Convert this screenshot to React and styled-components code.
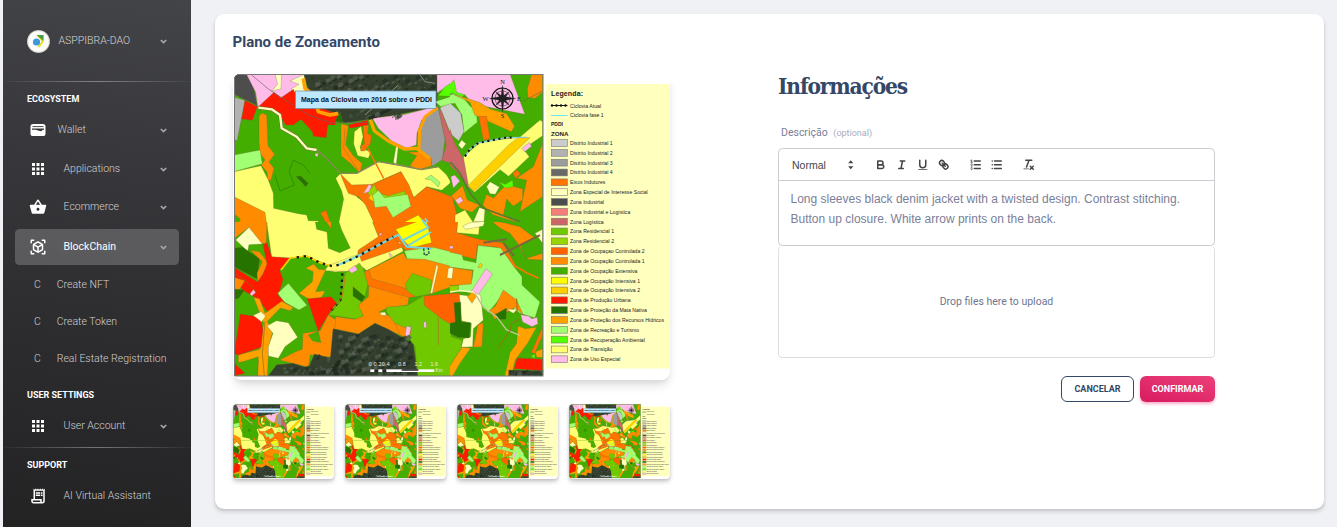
import React from "react";
import styled, { createGlobalStyle, css } from "styled-components";
import { MdApps, MdShoppingBasket, MdViewInAr, MdOutlineReceiptLong } from "react-icons/md";

const GlobalStyle = createGlobalStyle`
  * { box-sizing: border-box; }
  body { margin: 0; background: #f0f1f5; font-family: Roboto, "Liberation Sans", sans-serif; overflow: hidden; }
`;

const Page = styled.div`
  display: flex;
  height: 527px;
  padding-left: 3px;
`;

/* ---------- Sidebar ---------- */

const Sidebar = styled.nav`
  flex: none;
  width: 188px;
  height: 527px;
  overflow: hidden;
  background: linear-gradient(188deg, #434448 0%, #38383c 30%, #2c2c2f 65%, #232324 100%);
  color: #c9c9cb;
`;

const Profile = styled.div`
  height: 81px;
  display: flex;
  align-items: center;
  padding: 1px 24px 0 24px;
`;

const ProfileName = styled.span`
  flex: 1;
  margin-left: 8.5px;
  padding-bottom: 1px;
  font-size: 10.5px;
  font-weight: 300;
  color: #d6d6d8;
`;

const Divider = styled.div`
  height: 1px;
  margin-top: ${(p) => p.$top || 0}px;
  background: linear-gradient(90deg, rgba(255, 255, 255, 0.02), rgba(255, 255, 255, 0.36), rgba(255, 255, 255, 0.02));
`;

const SectionLabel = styled.div`
  height: ${(p) => p.$height || 33}px;
  display: flex;
  align-items: center;
  padding: 1px 0 0 24px;
  font-size: 9px;
  font-weight: 700;
  color: #fff;
`;

const NavItem = styled.div`
  height: ${(p) => p.$height || 36}px;
  margin: ${(p) => p.$top || 0}px 12px 0;
  padding: ${(p) => p.$drop || 0}px 12px 0;
  display: flex;
  align-items: center;
  border-radius: 4.5px;
  font-size: 10.5px;
  font-weight: 300;
  color: #d0d0d2;
  ${(p) =>
    p.$active &&
    css`
      background: rgba(255, 255, 255, 0.2);
      font-weight: 400;
      color: #fff;
    `}
`;

const NavIcon = styled.span`
  width: 22px;
  display: flex;
  justify-content: center;
  color: #fff;
  font-size: 18px;
`;

const NavText = styled.span`
  flex: 1;
  margin-left: ${(p) => p.$gap ?? 14.5}px;
  padding-bottom: 1px;
`;

const SubItem = styled.div`
  height: 37px;
  display: flex;
  align-items: center;
  padding: 1px 0 0 31px;
  font-size: 10.5px;
  font-weight: 300;
  color: #d0d0d2;
`;

const SubLetter = styled.span`
  width: 22.75px;
`;

/* ---------- Main card ---------- */

const Main = styled.main`
  flex: 1;
  padding: 14px 13px 18px 24px;
`;

const Card = styled.section`
  height: 495px;
  padding: 19px 109px 0 18px;
  background: #fff;
  border-radius: 9px;
  box-shadow: 0 3px 4.5px -0.75px rgba(0, 0, 0, 0.12), 0 1.5px 3px -0.75px rgba(0, 0, 0, 0.1);
`;

const CardTitle = styled.h1`
  margin: 0 0 0 -0.5px;
  height: 18px;
  font-size: 15px;
  line-height: 18px;
  font-weight: 700;
  color: #344767;
`;

const Columns = styled.div`
  display: flex;
  justify-content: space-between;
  padding-top: 22px;
`;

const Gallery = styled.div`
  width: 437px;
`;

const MainImage = styled.div`
  height: 307px;
  border-radius: 9px;
  overflow: hidden;
  box-shadow: 0 7px 11px -2px rgba(0, 0, 0, 0.13), 0 3px 5px -1px rgba(0, 0, 0, 0.06);
  > svg { display: block; width: 100%; height: 100%; }
`;

const Thumbs = styled.div`
  display: flex;
  justify-content: space-between;
  margin-top: 24px;
`;

const Thumb = styled.div`
  width: 101px;
  height: 75px;
  border-radius: 4.5px;
  overflow: hidden;
  background: #fff;
  box-shadow: 0 3px 4.5px -0.75px rgba(0, 0, 0, 0.18), 0 1.5px 3px -0.75px rgba(0, 0, 0, 0.1);
  > svg { display: block; width: 100%; height: 100%; }
`;

const Form = styled.div`
  width: 437px;
`;

const FormTitle = styled.h2`
  margin: 0;
  height: 27px;
  font-family: "Roboto Slab", "DejaVu Serif Condensed", "DejaVu Serif", serif;
  font-size: 22.5px;
  line-height: 27px;
  font-weight: 700;
  letter-spacing: -1.15px;
  color: #344767;
  white-space: nowrap;
`;

const FieldLabel = styled.div`
  height: 48px;
  padding: 25px 0 0 3px;
  font-size: 10.5px;
  line-height: 15px;
  color: #7b809a;
  small { margin-left: 3px; font-size: 9px; color: #a9adc0; }
`;

const Editor = styled.div`
  height: 98px;
  border: 1px solid #c9ccd1;
  border-radius: 4.5px;
`;

const Toolbar = styled.div`
  height: 32px;
  display: flex;
  align-items: center;
  padding-left: 13px;
  border-bottom: 1px solid #c9ccd1;
`;

const FormatPicker = styled.div`
  width: 65px;
  margin-right: 13px;
  display: flex;
  align-items: center;
  justify-content: space-between;
  font-family: "Liberation Sans", Arial, sans-serif;
  font-size: 10.5px;
  color: #444;
`;

const ToolGroup = styled.div`
  display: flex;
  margin-right: 11px;
`;

const Tool = styled.span`
  width: 21px;
  height: 18px;
  display: flex;
  align-items: center;
  justify-content: center;
`;

const Glyph = styled.svg`
  width: 13.5px;
  height: 13.5px;
  fill: none;
  stroke: #444;
  stroke-width: 2;
  stroke-linecap: round;
  stroke-linejoin: round;
  .fill { fill: #444; stroke: none; }
  .thin { stroke-width: 1; }
`;

const EditorText = styled.p`
  margin: 0;
  padding: 8px 11.5px;
  font-family: "Liberation Sans", Arial, sans-serif;
  font-size: 12px;
  line-height: 20px;
  color: #7b809a;
`;

const DropZone = styled.div`
  height: 112px;
  display: flex;
  align-items: center;
  justify-content: center;
  border: 1px solid #dcdee3;
  border-top-width: 0;
  border-radius: 4.5px;
  font-size: 10.5px;
  color: #6f7690;
`;

const Actions = styled.div`
  display: flex;
  justify-content: flex-end;
  gap: 6px;
  margin-top: 18px;
`;

const Button = styled.button`
  width: ${(p) => p.$width}px;
  height: 26px;
  padding: 0;
  border-radius: 6px;
  font-family: Roboto, sans-serif;
  font-size: 9px;
  font-weight: 700;
  color: #344767;
  background: #fff;
  border: 1px solid #344767;
  ${(p) =>
    p.$primary &&
    css`
      color: #fff;
      border: 0;
      background: linear-gradient(195deg, #ec407a, #d81b60);
      box-shadow: 0 2px 3px rgba(233, 30, 99, 0.35);
    `}
`;

/* ---------- Icons ---------- */

const Chevron = () => (
  <svg width="7" height="5" viewBox="0 0 7 5" fill="none" stroke="#a6a7ad" strokeWidth="1.7">
    <path d="M.8 1 3.5 3.6 6.2 1" />
  </svg>
);

const WalletIcon = () => (
  <svg width="16" height="14" viewBox="0 0 16 14">
    <rect x=".5" y="1" width="15" height="12" rx="2.6" fill="#fff" />
    <path d="M2.5 3.6h11" stroke="#36363a" strokeWidth=".9" />
    <path d="M2 5.5h12v1.2c-1.2 0-1.6.4-2.2 1-.5.6-1.2.7-2 .4L5.500 6.800H2z" fill="#36363a" />
  </svg>
);

const Logo = () => (
  <svg width="23" height="23" viewBox="0 0 23 23">
    <circle cx="11.5" cy="11.5" r="11.3" fill="#fffefa" />
    <circle cx="11.5" cy="11.5" r="10.8" fill="none" stroke="#b9b7ae" strokeDasharray="1.2 .7" />
    <path d="M9.500 5H16.500v7L12.500 17.500l-2-1 4-5z" fill="#e9df23" />
    <path d="M9.500 5H16.500v6z" fill="#4d9a47" />
    <circle cx="9.500" cy="12" r="3.600" fill="#3f97dd" />
  </svg>
);

const toolGroups = [
  [
    <>
      <path d="M5,4H9.5A2.5,2.5,0,0,1,12,6.5v0A2.5,2.5,0,0,1,9.5,9H5V4Z" />
      <path d="M5,9h5.5A2.5,2.5,0,0,1,13,11.5v0A2.5,2.5,0,0,1,10.5,14H5V9Z" />
    </>,
    <path d="M7 4H13M5 14H11M8 14 10 4" />,
    <>
      <path d="M5,3V9a4,4,0,0,0,8,0V3" />
      <rect className="fill" x="3" y="15" width="12" height="1" />
    </>,
    <>
      <path d="M7 7 11 11" />
      <path d="M8.9,4.577a3.476,3.476,0,0,1,.36,4.679A3.476,3.476,0,0,1,4.577,8.9C3.185,7.5,2.035,6.4,4.217,4.217S7.5,3.185,8.9,4.577Z" />
      <path d="M13.423,9.1a3.476,3.476,0,0,0-4.679-.36,3.476,3.476,0,0,0,.36,4.679c1.392,1.392,2.5,2.542,4.679.36S14.815,10.5,13.423,9.1Z" />
    </>,
  ],
  [
    <>
      <path d="M7 4H15M7 9H15M7 14H15" />
      <path className="thin" d="M2.5 5.5H4.5M2.5 3 3.5 2.5V5.5M4.5,10.5h-2c0-.234,1.85-1.076,1.85-2.234A.959.959,0,0,0,2.5,8.156M2.5,14.846a.959.959,0,0,0,1.85-.109A.7.7,0,0,0,3.75,14a.688.688,0,0,0,.6-.736.959.959,0,0,0-1.85-.109" />
    </>,
    <path d="M6 4H15M6 9H15M6 14H15M3 4H3M3 9H3M3 14H3" />,
  ],
  [
    <>
      <path d="M5 3H13M6 12 9.35 3M11 11 15 15M15 11 11 15" />
      <rect className="fill" x="2" y="14" width="7" height="1" />
    </>,
  ],
];

/* ---------- Zoning map ---------- */

const C = {
  green: "#44ae00", lime: "#70c800", lime2: "#96d600", mint: "#a2ff73", vivid: "#55ff00", forest: "#267300",
  orange: "#ff8c00", amber: "#ffa200", deep: "#ff7300", burnt: "#ff6200", gold: "#ffd000", yellow: "#ffff73",
  bright: "#ffff00", cream: "#ffffbe", red: "#ff1a00", pink: "#ffbce8", rose: "#cd6668", g1: "#cccccc",
  g2: "#b2b2b2", g3: "#9c9c9c", g4: "#686868", dark: "#4d4d4d", sat: "#35402f",
};

const northWest = [
  ["dark", "27,27 64,27 84,60 97,122 60,104 27,88"],
  ["pink", "64,27 236,27 215,80 165,110 98,125 92,82"],
  ["cream", "150,27 170,27 168,72 140,78 158,58"],
  ["cream", "195,48 238,28 246,82 210,86 198,72 222,58"],
  ["sat", "236,27 640,27 636,126 500,152 440,162 360,174 300,150 250,75"],
  ["g2", "27,97 60,106 36,228 27,222"],
  ["red", "60,106 97,125 82,166 50,162"],
  ["red", "100,125 147,82 168,98 205,73 232,128 290,130 340,148 330,180 308,180 304,218 265,214 262,200 228,163 205,180 182,180 165,150 130,133"],
  ["orange", "102,152 112,144 125,150 129,242 149,268 132,290 147,310 138,346 128,344 126,320 108,300 120,285 105,265 102,230"],
  ["mint", "27,270 105,255 112,296 27,320"],
  ["yellow", "27,320 108,302 130,345 145,385 146,430 220,446 245,450 250,467 280,468 280,480 27,480"],
  ["orange", "27,395 120,442 125,480 27,480"],
  ["green", "27,446 46,462 38,480 27,480"],
  ["forest", "330,168 345,140 354,174"],
  ["orange", "348,176 370,182 362,240 385,272 412,296 405,324 374,293 348,272"],
  ["red", "370,180 428,165 430,180 375,190"],
  ["yellow", "388,200 408,184 414,215 405,250 438,260 430,280 398,272 386,236"],
  ["deep", "414,182 430,180 428,206 440,210 436,238 418,258 407,258 408,240 418,238"],
  ["pink", "442,160 540,148 636,124 590,165 576,205 574,240 545,250 500,228 460,190"],
  ["g3", "600,152 640,128 660,220 652,284 622,304 618,286 582,256 584,190"],
  ["orange", "555,302 575,272 548,262 590,260 618,278 620,302 580,315"],
  ["g1", "645,128 680,110 680,214"],
  ["rose", "640,128 650,140 690,245 690,300 650,286 664,240"],
  ["pink", "636,27 680,27 680,55 636,84"],
  ["vivid", "660,65 690,48 690,95 640,92"],
  ["mint", "630,110 690,90 690,112 648,125"],
  ["yellow", "332,340 348,324 395,325 460,290 520,300 585,314 640,306 665,330 678,352 650,376 605,365 566,398 528,320 455,352 430,365 395,395 420,414 452,480 340,480 356,402 350,378"],
  ["deep", "346,326 380,360 442,358 455,352 528,320 552,360 566,398 605,365 680,395 680,480 450,480 422,420 402,396 370,385"],
  ["lime2", "428,380 448,358 460,384 490,392 540,378 540,396 480,408 436,402"],
  ["mint", "442,392 460,376 478,398 520,392 548,388 558,424 504,458 484,424 450,428"],
  ["gold", "430,400 440,385 448,412"],
  ["pink", "414,386 432,358 440,362 432,380"],
  ["mint", "600,342 618,330 645,352 640,366 618,345"],
  ["forest", "213,334 228,334 250,355 242,365"],
  ["deep", "286,443 304,436 318,480 306,480"],
  ["bright", "540,470 580,450 605,480 530,480"],
  ["cream", "505,292 514,240 520,242 514,298"],
  ["pink", "675,355 690,340 690,375"],
  ["pink", "270,266 280,264 278,276 270,272"],
];

const northEast = [
  ["pink", "0,27 210,27 255,148 190,135 100,118 75,90 30,85"],
  ["vivid", "14,76 42,44 50,82 76,90 64,95 36,84 0,105"],
  ["mint", "0,104 40,86 66,94 92,125 108,130 112,172 84,194 72,205 66,150 45,115 0,120"],
  ["g1", "4,126 28,112 62,144 72,200 56,228 30,205"],
  ["g3", "0,150 10,180 18,240 16,284 0,292"],
  ["rose", "0,128 20,160 42,230 75,290 108,325 86,368 50,320 16,290 18,250"],
  ["amber", "40,88 118,112 150,132 200,146 224,184 214,200 160,176 104,150 90,112"],
  ["deep", "116,154 140,154 150,222 130,226"],
  ["yellow", "70,276 120,232 240,216 300,165 308,170 308,212 250,252 268,275 206,334 180,314 104,382 86,365"],
  ["gold", "84,362 206,240 234,218 270,218 104,378"],
  ["orange", "275,27 308,27 308,82 285,100 264,98 262,72"],
  ["pink", "246,250 268,232 275,244 254,260"],
  ["orange", "230,340 280,305 308,235 308,395 240,440 260,345"],
  ["deep", "218,326 230,314 242,326 228,340"],
  ["orange", "128,420 140,388 160,400 186,372 200,358 248,372 248,404 220,424 200,402 190,452 240,475 160,450"],
  ["cream", "140,365 150,350 178,366 166,388 150,386"],
  ["vivid", "176,350 196,358 218,345 220,365 196,370"],
  ["cream", "55,240 65,225 78,236 66,252"],
  ["pink", "32,335 44,330 60,348 40,370"],
  ["deep", "0,358 38,400 50,445 50,480 0,480"],
  ["orange", "34,392 68,362 82,405 118,420 96,442 60,430"],
  ["pink", "46,405 62,395 70,408 54,418"],
  ["cream", "100,470 118,428 135,432 132,470"],
  ["yellow", "45,450 75,435 105,480 45,480"],
];

const southWest = [
  ["yellow", "124,0 470,0 470,50 400,95 415,150 330,156 300,150 310,136 245,108 190,115 140,112"],
  ["green", "270,0 340,0 350,30 376,84 344,98 310,85 306,36 275,28"],
  ["deep", "440,0 680,0 680,100 540,90 500,52 398,104 400,90 460,50"],
  ["orange", "300,0 320,0 318,26"],
  ["orange", "27,0 126,0 124,70 96,72 72,22 27,56"],
  ["cream", "32,60 72,22 112,72 72,74 68,94"],
  ["forest", "27,84 52,82 104,116 96,176 27,140"],
  ["orange", "76,90 104,96 130,130 126,150 98,186 96,160 112,125"],
  ["red", "114,74 126,68 140,110 196,114 164,150 174,178 160,228 186,245 150,262 128,276 100,238 56,212 27,182 27,142 98,186 115,160 126,132"],
  ["orange", "27,172 60,182 44,208 27,208"],
  ["forest", "27,208 58,210 40,236 27,236"],
  ["yellow", "310,137 380,110 525,65 535,94 425,152 400,130 370,154 300,152"],
  ["deep", "400,98 500,50 536,80 410,124"],
  ["mint", "158,220 190,190 246,256 222,270 178,246"],
  ["amber", "242,145 266,132 280,148 302,150 272,215 300,212 290,232 256,240 222,220 262,185 265,155"],
  ["lime", "360,160 404,130 432,180 420,228 404,256 415,288 400,298 310,285 350,240 352,190"],
  ["forest", "384,200 420,230 410,246 384,228"],
  ["pink", "370,150 390,136 398,150 380,160"],
  ["orange", "420,155 535,98 545,116 600,110 680,136 680,200 616,222 552,232 548,255 485,265 462,276 495,288 556,360 450,310 400,342 324,326 332,290 390,298 415,288 400,256 430,230 432,180"],
  ["deep", "418,155 432,150 440,176 545,206 572,230 552,232 430,198"],
  ["lime", "542,190 562,160 620,180 616,222 572,230 545,212"],
  ["mint", "538,92 625,82 690,98 690,142 600,118 546,116"],
  ["bright", "512,28 590,0 604,0 620,68 558,84 530,55"],
  ["cream", "616,220 634,135 640,138 622,220"],
  ["cream", "670,145 686,142 684,175 666,174"],
  ["lime", "485,262 548,256 598,226 690,320 690,480 578,480 570,380 545,345 510,310 484,275"],
  ["burnt", "597,228 690,220 690,320 650,296 598,256"],
  ["orange", "510,310 558,330 552,358 525,344"],
  ["cream", "464,278 480,276 484,286 470,286"],
  ["pink", "545,318 558,322 552,354 540,346"],
  ["pink", "596,305 604,305 604,325 596,322"],
  ["red", "246,236 318,230 334,248 310,284 280,334"],
  ["amber", "86,232 104,236 120,280 170,244 204,262 196,272 166,264 126,305 144,330 132,380 126,480 98,480 100,420 40,428 40,404 104,388 116,310"],
  ["red", "46,282 106,292 114,330 108,382 40,405 27,402"],
  ["green", "27,430 45,428 100,410 96,480 27,480"],
  ["red", "27,428 60,460 27,468"],
  ["cream", "84,286 108,275 122,288 110,306"],
  ["cream", "126,318 154,302 190,308 218,352 180,380 160,415 130,408 130,380 144,340"],
  ["orange", "234,340 286,332 310,284 332,300 322,412 256,404 250,442 164,420 210,396 232,388"],
  ["green", "250,345 280,334 288,368 262,362"],
  ["sat", "324,326 400,342 450,310 490,328 565,372 580,480 120,480 155,434 204,430 250,444 268,402 316,414"],
  ["pink", "74,222 86,208 92,218 80,228"],
  ["pink", "460,42 472,38 468,48"],
  ["pink", "492,98 502,106 496,112"],
  ["forest", "676,310 690,308 690,345 676,330"],
];

const southEast = [
  ["deep", "0,0 55,0 50,38 118,58 188,68 230,140 218,145 172,82 112,76 108,118 66,108 62,128 0,100"],
  ["yellow", "54,0 120,0 116,44 50,38"],
  ["cream", "68,18 90,8 134,4 130,18 100,24 76,28"],
  ["orange", "150,0 200,10 240,20 285,54 240,75 260,115 308,100 308,120 262,118 232,68 210,40 180,24"],
  ["cream", "285,40 308,28 308,70"],
  ["mint", "0,90 66,104 70,120 108,128 114,76 182,84 222,140 246,170 246,195 300,246 285,294 240,280 180,235 145,278 98,220 55,212 54,196 96,178 100,150 0,138"],
  ["orange", "0,136 98,152 94,192 0,200"],
  ["lime2", "0,200 56,196 54,212 0,218"],
  ["pink", "94,214 138,146 158,162 114,226"],
  ["cream", "24,142 40,144 36,176 22,174"],
  ["gold", "114,142 120,130 128,134 122,144"],
  ["burnt", "0,220 60,220 62,270 42,320 0,292"],
  ["lime", "0,298 30,320 35,350 66,360 64,386 24,446 22,480 0,480"],
  ["cream", "58,224 90,228 98,214 122,226 130,300 100,326 98,380 64,382 70,356 92,350 94,310 64,302"],
  ["forest", "42,248 62,246 64,306 92,308 88,354 54,352 30,340 30,310 46,306"],
  ["amber", "82,230 96,216 110,228 96,250"],
  ["orange", "148,272 166,258 190,210 230,240 250,285 225,262 165,298"],
  ["forest", "164,284 200,264 198,298 178,298"],
  ["cream", "200,268 232,268 220,280"],
  ["pink", "242,284 266,288 276,296 292,292 294,312 276,320 248,306"],
  ["orange", "114,314 130,308 126,380 100,382"],
  ["amber", "24,446 66,382 92,384 60,430 38,468 22,468"],
  ["amber", "194,470 210,398 230,370 234,318 256,326 290,322 264,368 226,420 214,468"],
  ["deep", "308,320 274,396 284,402 308,345"],
  ["red", "232,414 308,418 308,452 222,446"],
  ["sat", "206,450 308,452 308,480 206,480"],
  ["vivid", "272,408 286,402 284,416"],
  ["amber", "286,395 308,386 308,412 290,412"],
  ["pink", "26,78 40,78 38,86 28,86"],
];

const legend = [
  ["g1", "Distrito Industrial 1"], ["g2", "Distrito Industrial 2"], ["g3", "Distrito Industrial 3"],
  ["g4", "Distrito Industrial 4"], ["deep", "Eixos Indutores"], ["cream", "Zona Especial de Interesse Social"],
  ["dark", "Zona Industrial"], ["#f57d7a", "Zona Industrial e Logística"], ["rose", "Zona Logística"],
  ["lime", "Zona Residencial 1"], ["lime2", "Zona Residencial 2"], ["burnt", "Zona de Ocupaçao Controlada 2"],
  ["orange", "Zona de Ocupação Controlada 1"], ["green", "Zona de Ocupação Extensiva"],
  ["bright", "Zona de Ocupação Intensiva 1"], ["gold", "Zona de Ocupação Intensiva 2"],
  ["red", "Zona de Produção Urbana"], ["forest", "Zona de Proteção da Mata Nativa"],
  ["amber", "Zona de Proteção dos Recursos Hídricos"], ["mint", "Zona de Recreação e Turismo"],
  ["vivid", "Zona de Recuperação Ambiental"], ["yellow", "Zona de Transição"], ["pink", "Zona de Uso Especial"],
];

const Zones = ({ items }) =>
  items.map(([fill, points], i) => (
    <polygon key={i} points={points} fill={C[fill]} stroke="#6d6a3c" strokeWidth="1.3" strokeOpacity=".7" />
  ));

const Forest = ({ areas }) =>
  areas.flatMap(([x, y, w, h, n], a) =>
    Array.from({ length: n }, (_, i) => {
      const u = (i * 0.6180339 + a * 0.31) % 1;
      const v = (i * 0.754877 + 0.17) % 1;
      const r = 3 + ((i * 7) % 9);
      return (
        <path
          key={a + "-" + i}
          d={`M${x + u * w} ${y + v * h}l${r} ${-r / 2} ${r * 0.7} ${r * 0.6} ${-r / 2} ${r * 0.7} ${-r} ${r * 0.2}z`}
          fill={["#1d2a1f", "#4d5f4a", "#222e25", "#5d6257", "#2b3c2a"][i % 5]}
          opacity=".75"
        />
      );
    })
  );

const Line = ({ d, c, w = 2, dash }) => (
  <path d={d} fill="none" stroke={c} strokeWidth={w} strokeDasharray={dash} strokeLinejoin="round" />
);

const Compass = () => (
  <g transform="translate(502.5 98.5)" fill="none" stroke="#111">
    <circle r="10.5" strokeWidth="1.2" />
    <circle r="7.6" strokeWidth=".5" />
    <path d="M0-13 1.5-2 13 0 1.5 2 0 13-1.5 2-13 0-1.5-2z" fill="#222" strokeWidth=".3" />
    <path d="M-7-7 0-2 7-7 2 0 7 7 0 2-7 7-2 0z" fill="#222" strokeWidth=".3" />
    <g fill="#111" stroke="none" fontFamily="Liberation Serif, serif" fontSize="6.5" textAnchor="middle">
      <text y="-15">N</text>
      <text x="16.5" y="2.5">E</text>
      <text y="19.5">S</text>
      <text x="-17" y="2.2">W</text>
    </g>
  </g>
);

const ZoningMap = () => (
  <svg viewBox="233 73 437 307" preserveAspectRatio="none">
    <rect x="233" y="73" width="437" height="307" fill="#fff" />
    <rect x="234" y="74" width="309" height="302" fill={C.green} />

    <svg x="234" y="74" width="216" height="148" viewBox="27 27 648 444">
      <Zones items={northWest} />
      <Forest areas={[[260, 30, 360, 50, 90], [370, 132, 150, 25, 28]]} />
      <Line d="M100 128 140 133 165 150 170 190 215 215 245 250 275 255" c="#6d6a3c" w={10} />
      <Line d="M100 128 140 133 165 150 170 190 215 215 245 250 275 255" c={C.cream} w={7} />
      <Line d="M275 255 300 275 346 325 395 325 460 290 520 300 590 314 640 305" c="#8b8760" w={4} />
      <Line d="M235 40 240 70 265 90 280 140 315 150 340 145" c={C.amber} w={11} />
      <Line d="M436 164 448 198 490 228 538 252 575 250 614 280" c={C.amber} w={10} />
      <Line d="M638 128 600 155 584 195 582 250" c={C.amber} w={9} />
      <Line d="M428 250 476 340" c={C.deep} w={4} />
      <Line d="M360 190 356 250 375 280 400 315" c="#8c762e" w={1.5} />
      <Line d="M80 30 130 72 250 150 320 174 430 172" c="#666" w={2} />
      <Line d="M165 378 208 360 192 320 205 285 235 300 256 326M165 378 150 330" c="#368b00" w={3} />
      <Line d="M585 30 600 50 630 55M520 60 420 150" c="#8a8d7b" w={3} />
      <Line d="M590 465 610 480M600 460 615 480" c="#74dfe8" w={5} />
    </svg>

    <svg x="450" y="74" width="93.3" height="148" viewBox="30 27 280 444">
      <Zones items={northEast} />
      <Line d="M0 290 35 295 60 325 90 385 130 430 240 470" c="#5a7a32" w={5} />
      <Line d="M75 274 90 252 115 234 160 225 195 218 262 217" c="#86c9d6" w={4} />
      <Line d="M75 274 90 252 115 234 160 225 195 218 222 217" c="#111" w={6} dash="6 11" />
      <Line d="M308 78 250 108" c="#6d6a3c" />
    </svg>

    <svg x="234" y="222" width="216" height="154" viewBox="27 6 648 462">
      <Zones items={southWest} />
      <Forest areas={[[335, 345, 215, 95, 150], [170, 440, 390, 20, 70], [270, 405, 70, 40, 20]]} />
      <Line d="M168 150 196 114 246 108 284 128 320 138" c={C.gold} w={5} />
      <Line d="M340 135 400 108 520 44 545 80 620 86M535 60 610 22 590 0M550 76 618 36" c="#72d8df" w={6} />
      <Line d="M215 112 246 108 284 128 320 138 345 134 400 108 505 50" c="#151515" w={7} dash="7 14" />
      <Line d="M352 160 350 200 346 240 318 272" c="#151515" w={7} dash="7 12" />
      <Line d="M596 85 598 106 612 102 610 84" c="#204b50" w={4} dash="8 4" />
      <Line d="M27 158 60 180 98 220M120 304 112 400 118 468" c="#8f6a20" w={2} />
      <Line d="M640 290 640 375" c="#97901a" w={3} />
      <Line d="M362 160 352 230 320 270" c="#c28212" w={3} />
      <rect x="436" y="448" width="192" height="8" fill="#fff" />
      <path d="M448 448h12v8h-12zM472 448h12v8h-12zM530 448h50v4h-50z" fill="#222" />
    </svg>

    <svg x="450" y="222" width="93.3" height="154" viewBox="30 6 280 462">
      <Zones items={southEast} />
      <Line d="M180 105 300 45M130 68 200 58M190 68 222 108" c="#76683c" w={6} />
      <Line d="M225 138 260 158 296 175" c={C.deep} w={5} />
      <Line d="M105 220 130 262 170 290 200 330 240 346" c="#bcc58f" w={4} />
      <Line d="M172 386 212 330 214 310 240 298M230 235 232 285" c="#9b6f12" w={3} />
      <Line d="M0 220 60 212 100 216" c={C.cream} w={4} />
      <Forest areas={[[210, 452, 95, 14, 25]]} />
    </svg>

    <g fill="#eee" fontFamily="Liberation Sans, sans-serif" fontSize="5.3">
      <text x="368.700" y="366" textLength="21">0 0.20.4</text>
      <text x="398.300" y="366">0.8</text>
      <text x="414.500" y="366">1.2</text>
      <text x="430.500" y="366">1.6</text>
      <text x="435.500" y="372.300" fontSize="4.800">Km</text>
    </g>

    <rect x="234.5" y="74.5" width="308.5" height="301.5" fill="none" stroke="#777" />
    <Compass />

    <rect x="295.5" y="91" width="140.5" height="17.5" fill="#bee8ff" stroke="#7794a6" strokeWidth=".8" />
    <text x="301" y="102.2" fontFamily="Liberation Sans, sans-serif" fontWeight="700" fontSize="7" textLength="131" fill="#111">
      Mapa da Ciclovia em 2016 sobre o PDDI
    </text>

    <rect x="546" y="84" width="124" height="284.5" fill={C.cream} />
    <g fontFamily="Liberation Sans, sans-serif" fill="#222">
      <text x="551" y="96" fontSize="7" fontWeight="700" textLength="32">Legenda:</text>
      <path d="M551 105.5h16.5" stroke="#111" />
      <g fill="#111">
        <circle cx="552" cy="105.5" r="1.2" />
        <circle cx="556.5" cy="105.5" r="1.2" />
        <circle cx="561" cy="105.5" r="1.2" />
        <circle cx="565.5" cy="105.5" r="1.2" />
      </g>
      <path d="M551 115.5h16.500" stroke="#7adfee" />
      <text x="570" y="107.5" fontSize="5.2">Ciclovia Atual</text>
      <text x="570" y="117.3" fontSize="5.2">Ciclovia fase 1</text>
      <text x="551" y="126.3" fontSize="5" fontWeight="700">PDDI</text>
      <text x="551" y="136" fontSize="6.2" fontWeight="700">ZONA</text>
      {legend.map(([color, label], i) => (
        <g key={label}>
          <rect x="551.3" y={139.6 + i * 9.83} width="16" height="6.8" fill={C[color] || color} stroke="#777" strokeWidth=".6" />
          <text x="570" y={145 + i * 9.83} fontSize="5.15">{label}</text>
        </g>
      ))}
    </g>
  </svg>
);

export default function App() {
  return (
    <Page>
      <GlobalStyle />
      <Sidebar>
        <Profile>
          <Logo />
          <ProfileName>ASPPIBRA-DAO</ProfileName>
          <Chevron />
        </Profile>
        <Divider />
        <SectionLabel>ECOSYSTEM</SectionLabel>
        <NavItem $height={28} $drop={2}>
          <NavIcon><WalletIcon /></NavIcon>
          <NavText $gap={8.5}>Wallet</NavText>
          <Chevron />
        </NavItem>
        <NavItem $top={7} $drop={2}>
          <NavIcon><MdApps /></NavIcon>
          <NavText>Applications</NavText>
          <Chevron />
        </NavItem>
        <NavItem $top={3}>
          <NavIcon><MdShoppingBasket /></NavIcon>
          <NavText>Ecommerce</NavText>
          <Chevron />
        </NavItem>
        <NavItem $top={4} $active>
          <NavIcon><MdViewInAr /></NavIcon>
          <NavText>BlockChain</NavText>
          <Chevron />
        </NavItem>
        <SubItem><SubLetter>C</SubLetter>Create NFT</SubItem>
        <SubItem><SubLetter>C</SubLetter>Create Token</SubItem>
        <SubItem><SubLetter>C</SubLetter>Real Estate Registration</SubItem>
        <SectionLabel $height={37}>USER SETTINGS</SectionLabel>
        <NavItem $height={24} $drop={2}>
          <NavIcon><MdApps /></NavIcon>
          <NavText>User Account</NavText>
          <Chevron />
        </NavItem>
        <Divider $top={10} />
        <SectionLabel>SUPPORT</SectionLabel>
        <NavItem $height={28} $drop={2}>
          <NavIcon><MdOutlineReceiptLong /></NavIcon>
          <NavText>AI Virtual Assistant</NavText>
        </NavItem>
      </Sidebar>

      <Main>
        <Card>
          <CardTitle>Plano de Zoneamento</CardTitle>
          <Columns>
            <Gallery>
              <MainImage><ZoningMap /></MainImage>
              <Thumbs>
                {[0, 1, 2, 3].map((n) => (
                  <Thumb key={n}><ZoningMap /></Thumb>
                ))}
              </Thumbs>
            </Gallery>
            <Form>
              <FormTitle>Informações</FormTitle>
              <FieldLabel>Descrição <small>(optional)</small></FieldLabel>
              <Editor>
                <Toolbar>
                  <FormatPicker>
                    Normal
                    <Glyph viewBox="0 0 18 18">
                      <path className="fill" d="M5.500 11H12.500L9 15ZM5.500 7H12.500L9 3Z" />
                    </Glyph>
                  </FormatPicker>
                  {toolGroups.map((group, g) => (
                    <ToolGroup key={g}>
                      {group.map((glyph, i) => (
                        <Tool key={i}><Glyph viewBox="0 0 18 18">{glyph}</Glyph></Tool>
                      ))}
                    </ToolGroup>
                  ))}
                </Toolbar>
                <EditorText>
                  Long sleeves black denim jacket with a twisted design. Contrast stitching. Button up closure. White
                  arrow prints on the back.
                </EditorText>
              </Editor>
              <DropZone>Drop files here to upload</DropZone>
              <Actions>
                <Button $width={73}>CANCELAR</Button>
                <Button $width={75} $primary>CONFIRMAR</Button>
              </Actions>
            </Form>
          </Columns>
        </Card>
      </Main>
    </Page>
  );
}
